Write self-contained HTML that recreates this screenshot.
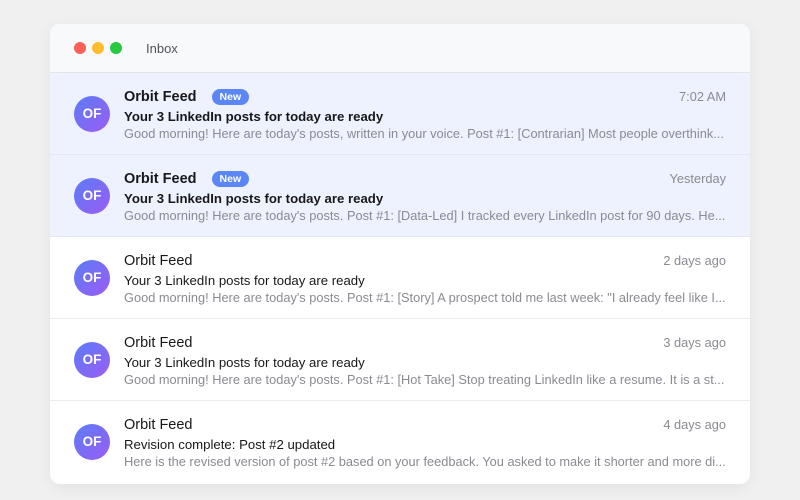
<!DOCTYPE html>
<html><head><style>
*{margin:0;padding:0;box-sizing:border-box}
body{width:800px;height:500px;background:#f0f0f1;font-family:"Liberation Sans",Arial,sans-serif;position:relative;overflow:hidden}
.win{position:absolute;left:50px;top:24px;width:700px;height:460px;background:#fff;border-radius:10px;overflow:hidden;box-shadow:0 4px 16px rgba(0,0,0,.06)}
.hdr{height:49px;background:#f8f9fb;border-bottom:1px solid #e4e4e7;position:relative}
.dot{position:absolute;top:18px;width:12px;height:12px;border-radius:50%}
.hdr .t{position:absolute;left:96px;top:17px;font-size:13px;color:#52525b}
.row{height:82px;position:relative;border-bottom:1px solid #ececef}
.row.u{background:#eef2fe;border-bottom-color:#e2e6f5}
.av{position:absolute;left:24px;top:23px;width:36px;height:36px;border-radius:50%;background:linear-gradient(135deg,#5b7cf7,#9b5cf6);color:#fff;font-weight:bold;font-size:13.5px;text-align:center;line-height:36px}
.n{position:absolute;left:74px;top:16px;font-size:14.5px;color:#18181b;line-height:17px}
.u .n{font-weight:bold}
.badge{display:inline-block;margin-left:15px;background:#5b86f5;color:#fff;font-size:10.5px;font-weight:bold;padding:1px 8px;border-radius:9px;vertical-align:1px;line-height:14px}
.s{position:absolute;left:74px;top:36px;font-size:13.2px;color:#18181b}
.u .s{font-weight:bold}
.p{position:absolute;left:74px;top:53px;font-size:12.8px;color:#8a8a92;white-space:nowrap}
.tm{position:absolute;right:24px;top:16px;font-size:12.8px;color:#8a8a92}
</style></head><body>
<div class="win">
<div class="hdr"><div class="dot" style="left:24px;background:#fe5f57"></div><div class="dot" style="left:42px;background:#febc2e"></div><div class="dot" style="left:60px;background:#28c840"></div><div class="t">Inbox</div></div>
<div class="row u"><div class="av">OF</div><div class="n">Orbit Feed<span class="badge">New</span></div><div class="tm">7:02 AM</div><div class="s">Your 3 LinkedIn posts for today are ready</div><div class="p">Good morning! Here are today's posts, written in your voice. Post #1: [Contrarian] Most people overthink...</div></div>
<div class="row u"><div class="av">OF</div><div class="n">Orbit Feed<span class="badge">New</span></div><div class="tm">Yesterday</div><div class="s">Your 3 LinkedIn posts for today are ready</div><div class="p">Good morning! Here are today's posts. Post #1: [Data-Led] I tracked every LinkedIn post for 90 days. He...</div></div>
<div class="row"><div class="av">OF</div><div class="n">Orbit Feed</div><div class="tm">2 days ago</div><div class="s">Your 3 LinkedIn posts for today are ready</div><div class="p">Good morning! Here are today's posts. Post #1: [Story] A prospect told me last week: "I already feel like I...</div></div>
<div class="row"><div class="av">OF</div><div class="n">Orbit Feed</div><div class="tm">3 days ago</div><div class="s">Your 3 LinkedIn posts for today are ready</div><div class="p">Good morning! Here are today's posts. Post #1: [Hot Take] Stop treating LinkedIn like a resume. It is a st...</div></div>
<div class="row" style="border-bottom:none"><div class="av">OF</div><div class="n">Orbit Feed</div><div class="tm">4 days ago</div><div class="s">Revision complete: Post #2 updated</div><div class="p">Here is the revised version of post #2 based on your feedback. You asked to make it shorter and more di...</div></div>
</div>
</body></html>
